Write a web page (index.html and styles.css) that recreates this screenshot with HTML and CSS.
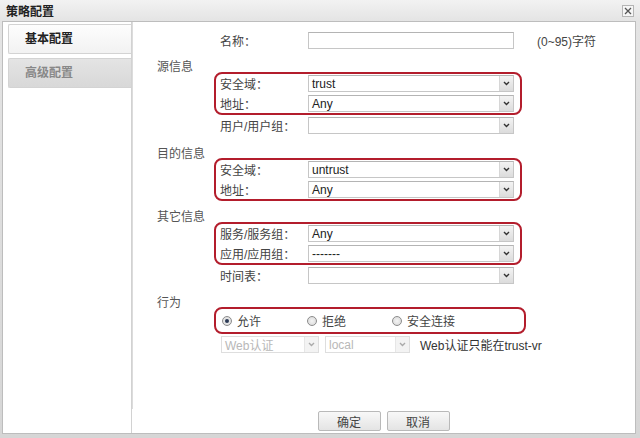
FILE: index.html
```html
<!DOCTYPE html>
<html lang="zh-CN">
<head>
  <meta charset="UTF-8">
  <title>策略配置</title>
  <link rel="stylesheet" href="styles.css">
</head>
<body>

  <div class="dialog">
    <div class="titlebar">
      <span class="title">策略配置</span>
      <span class="close">
        <svg width="8" height="8" viewBox="0 0 8 8"><path d="M1 1L7 7M7 1L1 7" stroke="#555" stroke-width="1.3"/></svg>
      </span>
    </div>

    <div class="dialog-body">
      <div class="sidebar">
        <div class="tab active">基本配置</div>
        <div class="tab">高级配置</div>
      </div>

      <div class="main">
        <div class="form">
          <div class="row plain name-row">
            <label>名称：</label>
            <div class="text-input"></div>
            <span class="hint">(0~95)字符</span>
          </div>

          <div class="section-title">源信息</div>
          <div class="group">
            <div class="row">
              <label>安全域：</label>
              <div class="select"><span>trust</span><i class="arrow"><svg width="7" height="5" viewBox="0 0 7 5"><path d="M1 1L3.5 3.5L6 1" fill="none" stroke="#333" stroke-width="1.4"/></svg></i></div>
            </div>
            <div class="row">
              <label>地址：</label>
              <div class="select"><span>Any</span><i class="arrow"><svg width="7" height="5" viewBox="0 0 7 5"><path d="M1 1L3.5 3.5L6 1" fill="none" stroke="#333" stroke-width="1.4"/></svg></i></div>
            </div>
          </div>
          <div class="row plain after-group">
            <label>用户/用户组：</label>
            <div class="select"><span></span><i class="arrow"><svg width="7" height="5" viewBox="0 0 7 5"><path d="M1 1L3.5 3.5L6 1" fill="none" stroke="#333" stroke-width="1.4"/></svg></i></div>
          </div>

          <div class="section-title dest">目的信息</div>
          <div class="group">
            <div class="row">
              <label>安全域：</label>
              <div class="select"><span>untrust</span><i class="arrow"><svg width="7" height="5" viewBox="0 0 7 5"><path d="M1 1L3.5 3.5L6 1" fill="none" stroke="#333" stroke-width="1.4"/></svg></i></div>
            </div>
            <div class="row">
              <label>地址：</label>
              <div class="select"><span>Any</span><i class="arrow"><svg width="7" height="5" viewBox="0 0 7 5"><path d="M1 1L3.5 3.5L6 1" fill="none" stroke="#333" stroke-width="1.4"/></svg></i></div>
            </div>
          </div>

          <div class="section-title other">其它信息</div>
          <div class="group">
            <div class="row">
              <label>服务/服务组：</label>
              <div class="select"><span>Any</span><i class="arrow"><svg width="7" height="5" viewBox="0 0 7 5"><path d="M1 1L3.5 3.5L6 1" fill="none" stroke="#333" stroke-width="1.4"/></svg></i></div>
            </div>
            <div class="row">
              <label>应用/应用组：</label>
              <div class="select"><span>-------</span><i class="arrow"><svg width="7" height="5" viewBox="0 0 7 5"><path d="M1 1L3.5 3.5L6 1" fill="none" stroke="#333" stroke-width="1.4"/></svg></i></div>
            </div>
          </div>
          <div class="row plain after-group">
            <label>时间表：</label>
            <div class="select"><span></span><i class="arrow"><svg width="7" height="5" viewBox="0 0 7 5"><path d="M1 1L3.5 3.5L6 1" fill="none" stroke="#333" stroke-width="1.4"/></svg></i></div>
          </div>

          <div class="section-title action">行为</div>
          <div class="group radios">
            <div class="radio-item"><i class="radio checked"></i>允许</div>
            <div class="radio-item"><i class="radio"></i>拒绝</div>
            <div class="radio-item"><i class="radio"></i>安全连接</div>
          </div>
          <div class="row auth-row">
            <div class="select disabled web"><span>Web认证</span><i class="arrow"><svg width="7" height="5" viewBox="0 0 7 5"><path d="M1 1L3.5 3.5L6 1" fill="none" stroke="#aaa" stroke-width="1.4"/></svg></i></div>
            <div class="select disabled local"><span>local</span><i class="arrow"><svg width="7" height="5" viewBox="0 0 7 5"><path d="M1 1L3.5 3.5L6 1" fill="none" stroke="#aaa" stroke-width="1.4"/></svg></i></div>
            <span class="auth-note">Web认证只能在trust-vr</span>
          </div>
        </div>

        <div class="footer">
          <button>确定</button>
          <button>取消</button>
        </div>
      </div>
    </div>
  </div>

</body>
</html>
```

FILE: styles.css
```css
body {
  margin: 0;
  font-family: "Liberation Sans", "Noto Sans CJK SC", sans-serif;
  font-size: 12px;
  color: #444;
}
.dialog {
  height: 438px;
  display: flex;
  flex-direction: column;
  background: linear-gradient(#f2f2f2, #e4e4e4 21px, #d6d6d6);
}
.titlebar {
  height: 21px;
  display: flex;
  align-items: center;
  justify-content: space-between;
  padding: 0 6px 0 6px;
}
.title {
  font-weight: bold;
  color: #222;
}
.close {
  width: 10px;
  height: 10px;
  border: 1px solid #b5b5b5;
  background: #f6f6f6;
  display: flex;
  align-items: center;
  justify-content: center;
}
.dialog-body {
  flex: 1;
  display: flex;
  margin: 0 4px 4px 2px;
  background: #fff;
  border: 1px solid #bdbdbd;
}
.sidebar {
  width: 128px;
  border-right: 1px solid #d2d2d2;
  padding-top: 2px;
}
.tab {
  margin-left: 5px;
  height: 28px;
  line-height: 28px;
  padding-left: 16px;
  border: 1px solid #d3d3d3;
  border-right: none;
  border-radius: 2px 0 0 2px;
  font-weight: bold;
  color: #888;
  background: linear-gradient(#e4e4e4, #d8d8d8);
  margin-bottom: 4px;
}
.tab.active {
  color: #222;
  background: linear-gradient(#fdfdfd, #f2f2f2);
}
.main {
  flex: 1;
  display: flex;
  flex-direction: column;
}
.form {
  flex: 1;
  border-left: 1px solid #dcdcdc;
  padding-top: 10px;
}
.row {
  display: flex;
  align-items: center;
  height: 17px;
}
.row label {
  width: 88px;
}
.plain {
  padding-left: 87px;
}
.after-group {
  margin-top: 2px;
}
.text-input,
.select {
  width: 206px;
  height: 17px;
  box-sizing: border-box;
  border: 1px solid #c6c6c6;
  border-top-color: #b4b4b4;
  background: #fff;
}
.hint {
  margin-left: 23px;
}
.select {
  display: flex;
  align-items: center;
  color: #222;
}
.select span {
  padding-left: 3px;
}
.arrow {
  margin-left: auto;
  width: 13px;
  height: 15px;
  border-left: 1px solid #d6d6d6;
  background: linear-gradient(#f3f3f3, #dcdcdc);
  display: flex;
  align-items: center;
  justify-content: center;
}
.section-title {
  padding-left: 24px;
  line-height: 14px;
  color: #555;
  margin-top: 11px;
  margin-bottom: -2px;
}
.section-title.dest {
  margin-top: 13px;
  margin-bottom: -3px;
}
.section-title.other {
  margin-top: 9px;
}
.section-title.action {
  margin-top: 12px;
  margin-bottom: -3px;
}
.group {
  margin-left: 81px;
  width: 308px;
  box-sizing: border-box;
  border: 2px solid #b31d2c;
  border-radius: 8px;
  padding: 1px 6px 1px 4px;
  display: flex;
  flex-direction: column;
  gap: 3px;
}
.group.radios {
  width: 312px;
  flex-direction: row;
  gap: 0;
  padding: 3px 6px;
  height: 27px;
  align-items: center;
}
.radio-item {
  width: 85px;
  display: flex;
  align-items: center;
  gap: 5px;
}
.radio {
  width: 8px;
  height: 8px;
  border: 1px solid #8c8c8c;
  border-radius: 50%;
  background: radial-gradient(#f4f4f4, #d6d6d6);
  display: flex;
  align-items: center;
  justify-content: center;
}
.radio.checked::after {
  content: "";
  width: 4px;
  height: 4px;
  border-radius: 50%;
  background: #2c3a55;
}
.auth-row {
  margin-top: 2px;
  padding-left: 88px;
}
.select.disabled {
  border-color: #dedede;
  color: #b8b8b8;
}
.select.disabled .arrow {
  background: #f3f3f3;
  border-left-color: #e6e6e6;
}
.select.web {
  width: 98px;
}
.select.local {
  width: 85px;
  margin-left: 6px;
}
.auth-note {
  margin-left: 10px;
  color: #333;
}
.footer {
  display: flex;
  justify-content: center;
  gap: 6px;
  padding: 2px 0 2px;
}
.footer button {
  width: 63px;
  height: 20px;
  border: 1px solid #b9b9b9;
  border-radius: 2px;
  background: linear-gradient(#f8f8f8, #e4e4e4);
  font-family: inherit;
  font-size: 12px;
  color: #444;
  padding: 0;
}
```
